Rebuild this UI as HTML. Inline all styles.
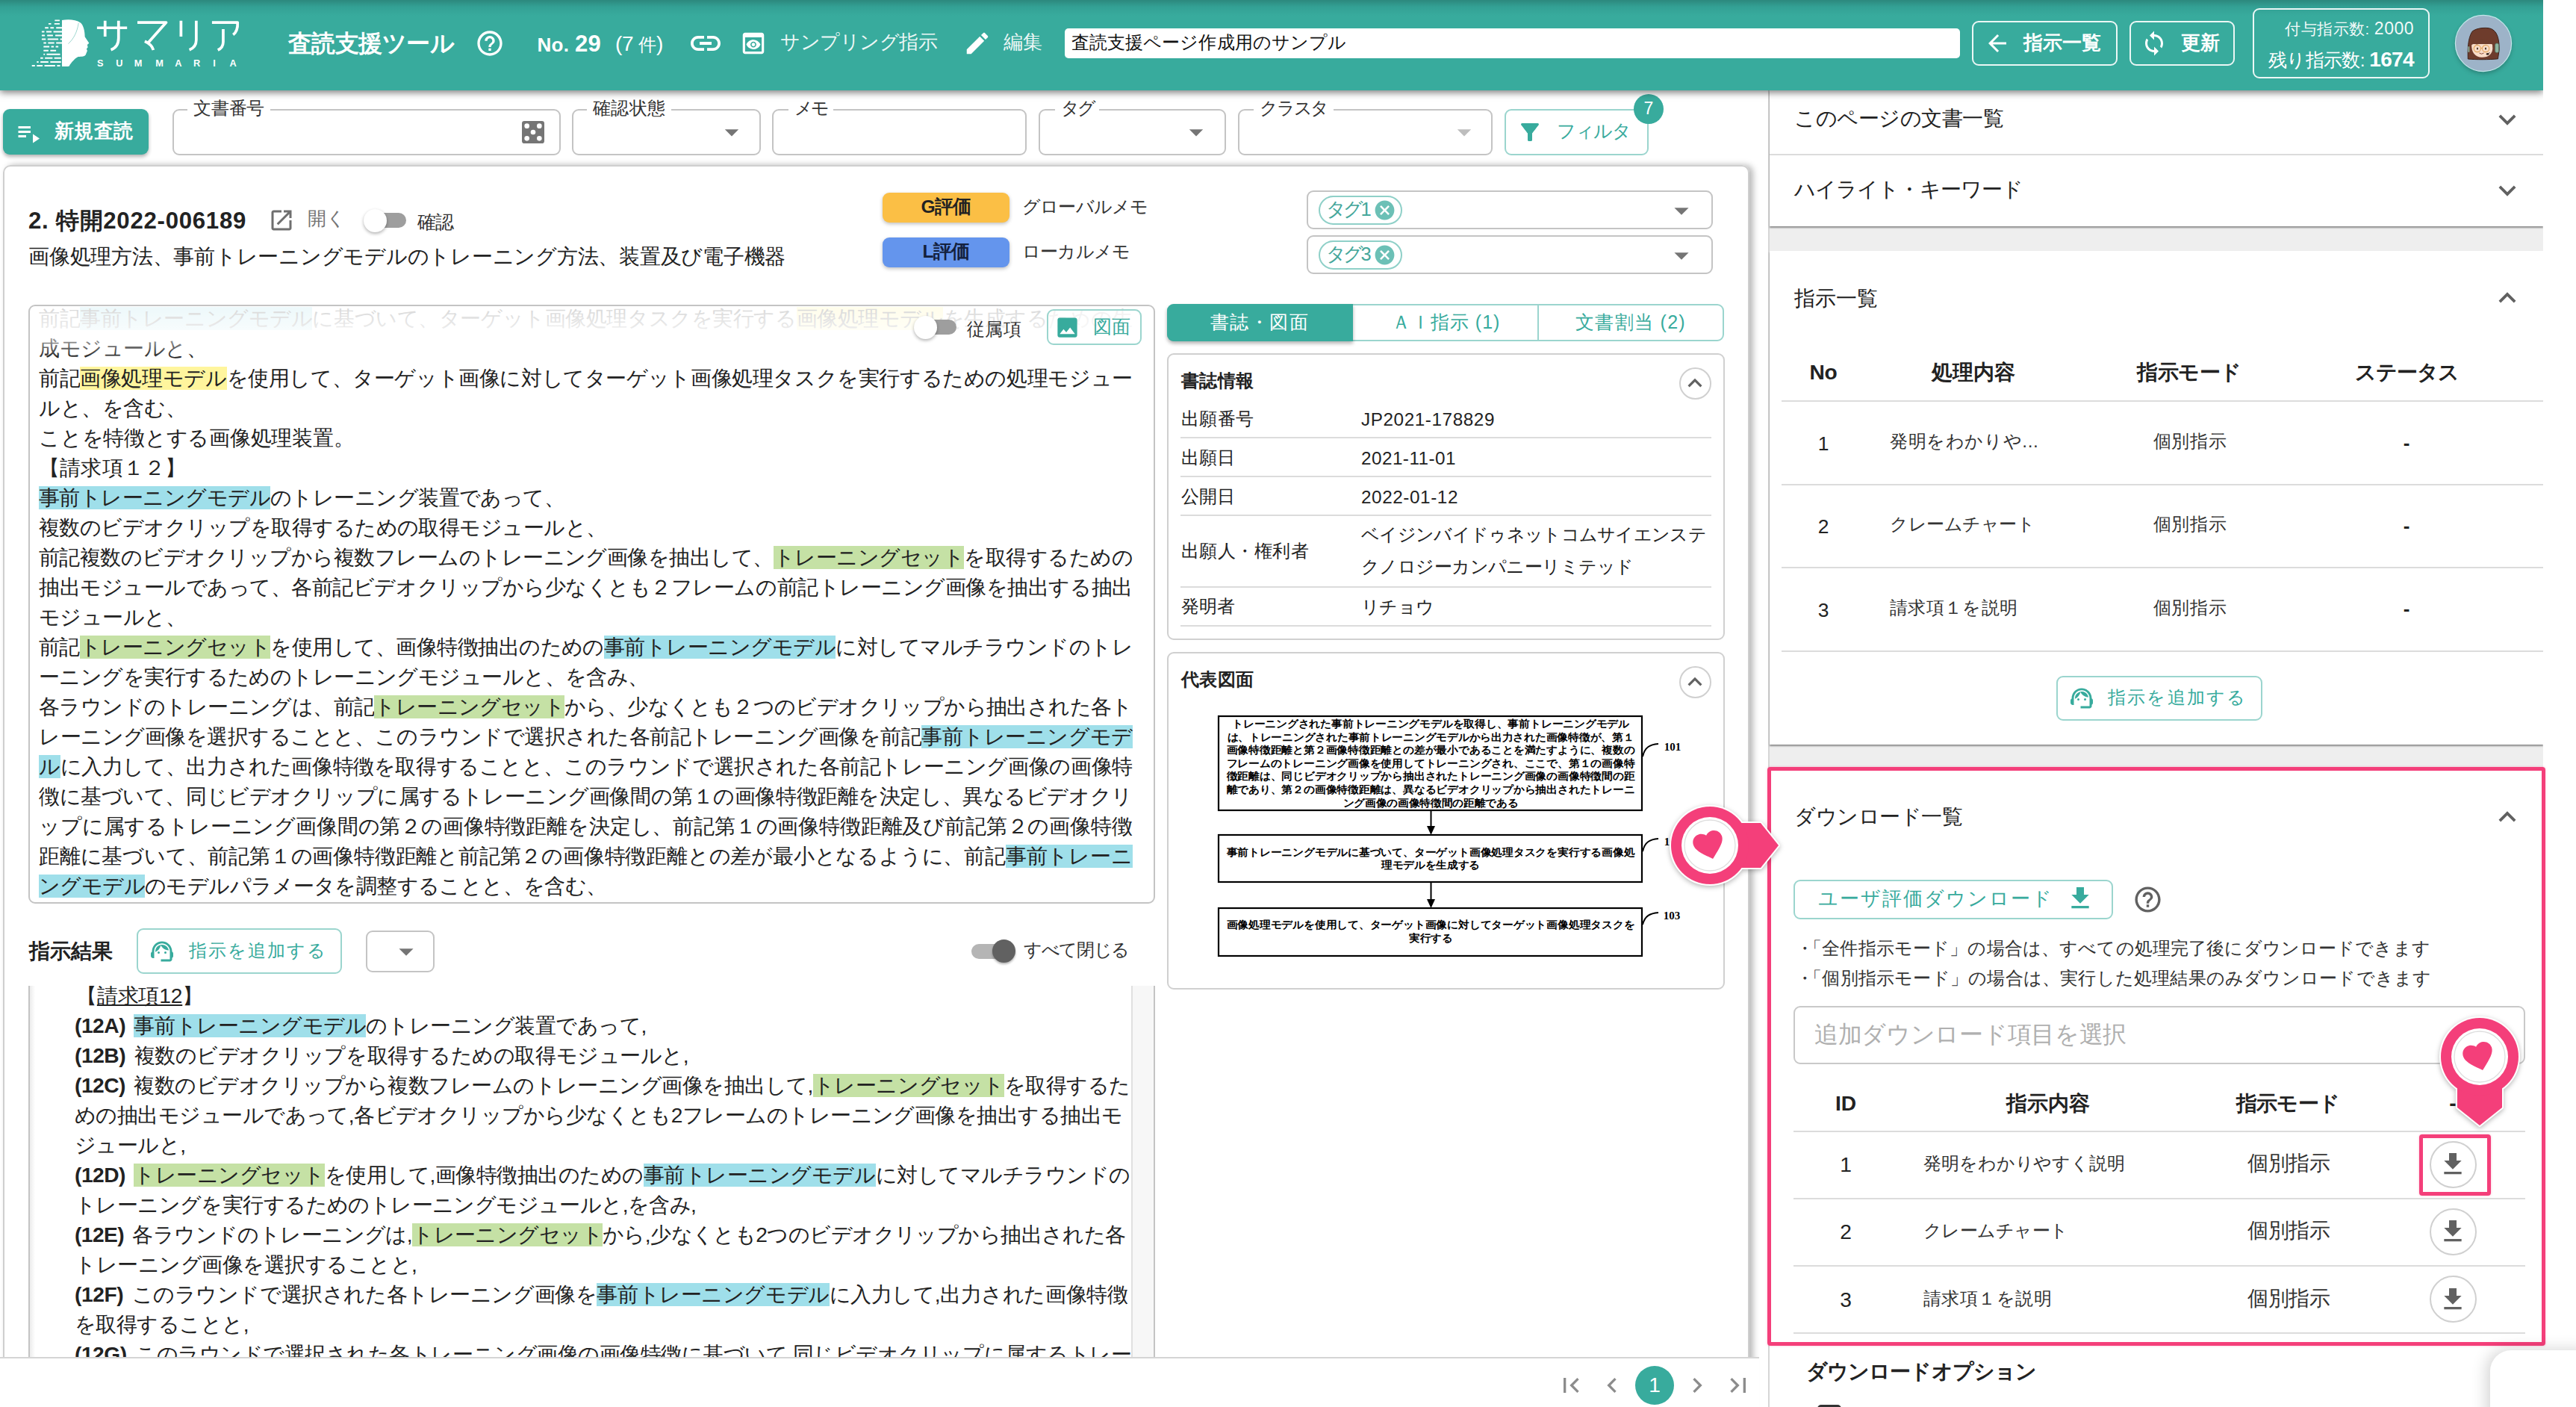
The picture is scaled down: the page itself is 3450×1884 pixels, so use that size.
<!DOCTYPE html>
<html><head><meta charset="utf-8"><title>査読支援ツール</title><style>html,body{margin:0;padding:0}body{width:3450px;height:1884px;position:relative;overflow:hidden;background:#fff;font-family:"Liberation Sans",sans-serif;}svg{display:block}b{font-weight:700;margin-right:4px}</style></head><body>
<div style="position:absolute;left:4px;top:221px;width:2339px;height:1679px;box-sizing:border-box;border:2px solid #cfcfcf;border-radius:10px;box-shadow:5px 0 9px rgba(0,0,0,.28)"></div>
<div style="position: absolute; left: 38px; top: 271.5px; height: 47px; line-height: 47px; font-size: 31.2px; color: rgb(34, 34, 34); font-weight: 700; white-space: nowrap; letter-spacing: 0.72px;">2. 特開2022-006189</div>
<svg style="position:absolute;left:358.8px;top:277.0px;" width="36" height="36" viewBox="0 0 24 24"><path fill="#6f6f6f" d="M19 19H5V5h7V3H5c-1.11 0-2 .9-2 2v14c0 1.1.89 2 2 2h14c1.1 0 2-.9 2-2v-7h-2v7zM14 3v2h3.59l-9.83 9.83 1.41 1.41L19 6.41V10h2V3h-7z"></path></svg>
<div style="position: absolute; left: 412px; top: 273.5px; height: 37px; line-height: 37px; font-size: 24.6px; color: rgb(117, 117, 117); font-weight: 400; white-space: nowrap; letter-spacing: 0.25px;">開く</div>
<div style="position:absolute;left:502px;top:285px;width:42px;height:20px;box-sizing:border-box;background:#9e9e9e;border-radius:10px"></div><div style="position:absolute;left:486.5px;top:279.5px;width:31.0px;height:31.0px;box-sizing:border-box;background:#fff;border-radius:50%;box-shadow:0 2px 4px rgba(0,0,0,.3)"></div>
<div style="position: absolute; left: 559px; top: 278.5px; height: 37px; line-height: 37px; font-size: 24.6px; color: rgb(51, 51, 51); font-weight: 400; white-space: nowrap; letter-spacing: -1px;">確認</div>
<div style="position: absolute; left: 38px; top: 323px; height: 42px; line-height: 42px; font-size: 28.16px; color: rgb(34, 34, 34); font-weight: 400; white-space: nowrap; letter-spacing: -0.25px;">画像処理方法、事前トレーニングモデルのトレーニング方法、装置及び電子機器</div>
<div style="position:absolute;left:1182px;top:258px;width:170px;height:40px;box-sizing:border-box;background:#fbbf45;border-radius:9px;box-shadow:0 2px 5px rgba(0,0,0,.25);text-align:center;font-weight:700;font-size:24.6px;line-height:38px;color:#222"><span style="letter-spacing: -0.71px;">G評価</span></div>
<div style="position:absolute;left:1182px;top:318px;width:170px;height:40px;box-sizing:border-box;background:#6495ed;border-radius:9px;box-shadow:0 2px 5px rgba(0,0,0,.25);text-align:center;font-weight:700;font-size:24.6px;line-height:38px;color:#14213d"><span style="letter-spacing: -0.68px;">L評価</span></div>
<div style="position: absolute; left: 1369px; top: 259px; height: 36px; line-height: 36px; font-size: 24.3px; color: rgb(51, 51, 51); font-weight: 400; white-space: nowrap; letter-spacing: -0.79px;">グローバルメモ</div>
<div style="position: absolute; left: 1369px; top: 319px; height: 36px; line-height: 36px; font-size: 24.3px; color: rgb(51, 51, 51); font-weight: 400; white-space: nowrap; letter-spacing: -0.83px;">ローカルメモ</div>
<div style="position:absolute;left:1750px;top:255px;width:544px;height:52px;box-sizing:border-box;border:2px solid #c4c4c4;border-radius:9px"></div>
<div style="position:absolute;left:1766px;top:261.5px;width:112px;height:39.0px;box-sizing:border-box;border:2px solid #8fd0c8;border-radius:20px"></div>
<div style="position: absolute; left: 1776px; top: 261px; height: 38px; line-height: 38px; font-size: 25.5px; color: rgb(69, 167, 155); font-weight: 400; white-space: nowrap; letter-spacing: -3.73px;">タグ1</div>
<svg style="position:absolute;left:1838.5px;top:265.5px;" width="31" height="31" viewBox="0 0 24 24"><path fill="#6cc0b6" d="M12,2C17.53,2 22,6.47 22,12C22,17.53 17.53,22 12,22C6.47,22 2,17.53 2,12C2,6.47 6.47,2 12,2M15.59,7L12,10.59L8.41,7L7,8.41L10.59,12L7,15.59L8.41,17L12,13.41L15.59,17L17,15.59L13.41,12L17,8.41L15.59,7Z"></path></svg>
<svg style="position:absolute;left:2228.5px;top:259.0px;" width="46" height="46" viewBox="0 0 24 24"><path fill="#757575" d="M7,10L12,15L17,10H7Z"></path></svg>
<div style="position:absolute;left:1750px;top:315px;width:544px;height:52px;box-sizing:border-box;border:2px solid #c4c4c4;border-radius:9px"></div>
<div style="position:absolute;left:1766px;top:321.5px;width:112px;height:39.0px;box-sizing:border-box;border:2px solid #8fd0c8;border-radius:20px"></div>
<div style="position: absolute; left: 1776px; top: 321px; height: 38px; line-height: 38px; font-size: 25.5px; color: rgb(69, 167, 155); font-weight: 400; white-space: nowrap; letter-spacing: -3.73px;">タグ3</div>
<svg style="position:absolute;left:1838.5px;top:325.5px;" width="31" height="31" viewBox="0 0 24 24"><path fill="#6cc0b6" d="M12,2C17.53,2 22,6.47 22,12C22,17.53 17.53,22 12,22C6.47,22 2,17.53 2,12C2,6.47 6.47,2 12,2M15.59,7L12,10.59L8.41,7L7,8.41L10.59,12L7,15.59L8.41,17L12,13.41L15.59,17L17,15.59L13.41,12L17,8.41L15.59,7Z"></path></svg>
<svg style="position:absolute;left:2228.5px;top:319.0px;" width="46" height="46" viewBox="0 0 24 24"><path fill="#757575" d="M7,10L12,15L17,10H7Z"></path></svg>
<div style="position:absolute;left:38px;top:408px;width:1509px;height:802px;box-sizing:border-box;border:2px solid #c4c4c4;border-radius:9px;overflow:hidden;font-size:28.16px;color:#222;"><div style="position:absolute;left:12px;top:-3px"><div style="height: 40px; line-height: 40px; white-space: nowrap; color: rgb(194, 194, 194); letter-spacing: -0.43px;">前記<span style="background:#e3f5f8">事前トレーニングモデル</span>に基づいて、ターゲット画像処理タスクを実行する<span style="background:#fffce0">画像処理モデル</span>を生成するための生</div><div style="height: 40px; line-height: 40px; white-space: nowrap; letter-spacing: -0.45px;">成モジュールと、</div><div style="height: 40px; line-height: 40px; white-space: nowrap; letter-spacing: -0.39px;">前記<span style="background:#fff59d">画像処理モデル</span>を使用して、ターゲット画像に対してターゲット画像処理タスクを実行するための処理モジュー</div><div style="height: 40px; line-height: 40px; white-space: nowrap; letter-spacing: -0.4px;">ルと、を含む、</div><div style="height: 40px; line-height: 40px; white-space: nowrap; letter-spacing: -0.23px;">ことを特徴とする画像処理装置。</div><div style="height: 40px; line-height: 40px; white-space: nowrap; letter-spacing: 0.17px;">【請求項１２】</div><div style="height: 40px; line-height: 40px; white-space: nowrap; letter-spacing: -0.55px;"><span style="background:#9fdfea">事前トレーニングモデル</span>のトレーニング装置であって、</div><div style="height: 40px; line-height: 40px; white-space: nowrap; letter-spacing: -0.53px;">複数のビデオクリップを取得するための取得モジュールと、</div><div style="height: 40px; line-height: 40px; white-space: nowrap; letter-spacing: -0.52px;">前記複数のビデオクリップから複数フレームのトレーニング画像を抽出して、<span style="background:#c5e1a5">トレーニングセット</span>を取得するための</div><div style="height: 40px; line-height: 40px; white-space: nowrap; letter-spacing: -0.47px;">抽出モジュールであって、各前記ビデオクリップから少なくとも２フレームの前記トレーニング画像を抽出する抽出</div><div style="height: 40px; line-height: 40px; white-space: nowrap; letter-spacing: -0.54px;">モジュールと、</div><div style="height: 40px; line-height: 40px; white-space: nowrap; letter-spacing: -0.52px;">前記<span style="background:#c5e1a5">トレーニングセット</span>を使用して、画像特徴抽出のための<span style="background:#9fdfea">事前トレーニングモデル</span>に対してマルチラウンドのトレ</div><div style="height: 40px; line-height: 40px; white-space: nowrap; letter-spacing: -0.56px;">ーニングを実行するためのトレーニングモジュールと、を含み、</div><div style="height: 40px; line-height: 40px; white-space: nowrap; letter-spacing: -0.6px;">各ラウンドのトレーニングは、前記<span style="background:#c5e1a5">トレーニングセット</span>から、少なくとも２つのビデオクリップから抽出された各ト</div><div style="height: 40px; line-height: 40px; white-space: nowrap; letter-spacing: -0.47px;">レーニング画像を選択することと、このラウンドで選択された各前記トレーニング画像を前記<span style="background:#9fdfea">事前トレーニングモデ</span></div><div style="height: 40px; line-height: 40px; white-space: nowrap; letter-spacing: -0.39px;"><span style="background:#9fdfea">ル</span>に入力して、出力された画像特徴を取得することと、このラウンドで選択された各前記トレーニング画像の画像特</div><div style="height: 40px; line-height: 40px; white-space: nowrap; letter-spacing: -0.43px;">徴に基づいて、同じビデオクリップに属するトレーニング画像間の第１の画像特徴距離を決定し、異なるビデオクリ</div><div style="height: 40px; line-height: 40px; white-space: nowrap; letter-spacing: -0.16px;">ップに属するトレーニング画像間の第２の画像特徴距離を決定し、前記第１の画像特徴距離及び前記第２の画像特徴</div><div style="height: 40px; line-height: 40px; white-space: nowrap; letter-spacing: -0.2px;">距離に基づいて、前記第１の画像特徴距離と前記第２の画像特徴距離との差が最小となるように、前記<span style="background:#9fdfea">事前トレーニ</span></div><div style="height: 40px; line-height: 40px; white-space: nowrap; letter-spacing: -0.61px;"><span style="background:#9fdfea">ングモデル</span>のモデルパラメータを調整することと、を含む、</div></div><div style="position:absolute;left:0;top:0;width:100%;height:70px;background:linear-gradient(rgba(255,255,255,.35),rgba(255,255,255,.75) 50%,rgba(255,255,255,0))"></div></div>
<div style="position:absolute;left:1239px;top:428px;width:42px;height:20px;box-sizing:border-box;background:#9e9e9e;border-radius:10px"></div><div style="position:absolute;left:1223.5px;top:422.5px;width:31.0px;height:31.0px;box-sizing:border-box;background:#fff;border-radius:50%;box-shadow:0 2px 4px rgba(0,0,0,.3)"></div>
<div style="position: absolute; left: 1295px; top: 421.5px; height: 37px; line-height: 37px; font-size: 24.4px; color: rgb(51, 51, 51); font-weight: 400; white-space: nowrap; letter-spacing: 0.33px;">従属項</div>
<div style="position:absolute;left:1402px;top:414px;width:127px;height:48px;box-sizing:border-box;border:2px solid #9bd5ce;border-radius:9px;background:rgba(255,255,255,.62)"></div>
<svg style="position:absolute;left:1412.0px;top:420.5px;" width="35" height="35" viewBox="0 0 24 24"><path fill="#38ab9d" d="M8.5,13.5L11,16.5L14.5,12L19,18H5M21,19V5C21,3.89 20.1,3 19,3H5A2,2 0 0,0 3,5V19A2,2 0 0,0 5,21H19A2,2 0 0,0 21,19Z"></path></svg>
<div style="position: absolute; left: 1464px; top: 418px; height: 38px; line-height: 38px; font-size: 25px; color: rgb(56, 171, 157); font-weight: 400; white-space: nowrap; letter-spacing: 0px;">図面</div>
<div style="position:absolute;left:1563px;top:407px;width:746px;height:50px;box-sizing:border-box;border:2px solid #9bd5ce;border-radius:9px"></div>
<div style="position:absolute;left:1563px;top:407px;width:249px;height:50px;box-sizing:border-box;background:#38ab9d;border-radius:9px 0 0 9px;box-shadow:0 3px 5px rgba(0,0,0,.3)"></div>
<div style="position:absolute;left:2059px;top:407px;width:2px;height:50px;box-sizing:border-box;background:#9bd5ce"></div>
<div style="position: absolute; left: 1687px; top: 412px; height: 38px; line-height: 38px; font-size: 25px; color: rgb(255, 255, 255); font-weight: 400; white-space: nowrap; transform: translateX(-50%); letter-spacing: 1.6px;">書誌・図面</div>
<div style="position: absolute; left: 1936.5px; top: 412px; height: 38px; line-height: 38px; font-size: 25px; color: rgb(56, 171, 157); font-weight: 400; white-space: nowrap; transform: translateX(-50%); letter-spacing: 1.06px;">ＡＩ指示 (1)</div>
<div style="position: absolute; left: 2184px; top: 412px; height: 38px; line-height: 38px; font-size: 25px; color: rgb(56, 171, 157); font-weight: 400; white-space: nowrap; transform: translateX(-50%); letter-spacing: 1.31px;">文書割当 (2)</div>
<div style="position:absolute;left:1563px;top:473px;width:747px;height:384px;box-sizing:border-box;border:2px solid #d0d0d0;border-radius:9px"></div>
<div style="position: absolute; left: 1582px; top: 490.5px; height: 37px; line-height: 37px; font-size: 24.4px; color: rgb(34, 34, 34); font-weight: 700; white-space: nowrap; letter-spacing: 0.25px;">書誌情報</div>
<div style="position:absolute;left:2248.5px;top:491.5px;width:43.0px;height:43.0px;box-sizing:border-box;border:2px solid #d0d0d0;border-radius:50%"></div><svg style="position:absolute;left:2251.0px;top:494.0px;" width="38" height="38" viewBox="0 0 24 24"><path fill="#616161" d="M12 8l-6 6 1.41 1.41L12 10.83l4.59 4.59L18 14z"></path></svg>
<div style="position: absolute; left: 1582px; top: 543px; height: 36px; line-height: 36px; font-size: 24.3px; color: rgb(34, 34, 34); font-weight: 400; white-space: nowrap; letter-spacing: 0.25px;">出願番号</div>
<div style="position: absolute; left: 1823px; top: 544px; height: 36px; line-height: 36px; font-size: 24.3px; color: rgb(34, 34, 34); font-weight: 400; white-space: nowrap; letter-spacing: 0.57px;">JP2021-178829</div>
<div style="position:absolute;left:1581px;top:585.0px;width:711px;height:2px;background:#dcdcdc"></div>
<div style="position: absolute; left: 1582px; top: 595px; height: 36px; line-height: 36px; font-size: 24.3px; color: rgb(34, 34, 34); font-weight: 400; white-space: nowrap; letter-spacing: 0px;">出願日</div>
<div style="position: absolute; left: 1823px; top: 596px; height: 36px; line-height: 36px; font-size: 24.3px; color: rgb(34, 34, 34); font-weight: 400; white-space: nowrap; letter-spacing: 0.45px;">2021-11-01</div>
<div style="position:absolute;left:1581px;top:637.0px;width:711px;height:2px;background:#dcdcdc"></div>
<div style="position: absolute; left: 1582px; top: 646.5px; height: 36px; line-height: 36px; font-size: 24.3px; color: rgb(34, 34, 34); font-weight: 400; white-space: nowrap; letter-spacing: 0px;">公開日</div>
<div style="position: absolute; left: 1823px; top: 647.5px; height: 36px; line-height: 36px; font-size: 24.3px; color: rgb(34, 34, 34); font-weight: 400; white-space: nowrap; letter-spacing: 0.57px;">2022-01-12</div>
<div style="position:absolute;left:1581px;top:689.0px;width:711px;height:2px;background:#dcdcdc"></div>
<div style="position: absolute; left: 1582px; top: 720px; height: 36px; line-height: 36px; font-size: 24.3px; color: rgb(34, 34, 34); font-weight: 400; white-space: nowrap; letter-spacing: 0.43px;">出願人・権利者</div>
<div style="position:absolute;left:1581px;top:785.0px;width:711px;height:2px;background:#dcdcdc"></div>
<div style="position: absolute; left: 1582px; top: 793.5px; height: 36px; line-height: 36px; font-size: 24.3px; color: rgb(34, 34, 34); font-weight: 400; white-space: nowrap; letter-spacing: 0px;">発明者</div>
<div style="position: absolute; left: 1823px; top: 794.5px; height: 36px; line-height: 36px; font-size: 24.3px; color: rgb(34, 34, 34); font-weight: 400; white-space: nowrap; letter-spacing: -0.75px;">リチョウ</div>
<div style="position:absolute;left:1581px;top:837.0px;width:711px;height:2px;background:#dcdcdc"></div>
<div style="position: absolute; left: 1823px; top: 697.5px; height: 36px; line-height: 36px; font-size: 24.3px; color: rgb(34, 34, 34); font-weight: 400; white-space: nowrap; letter-spacing: -0.68px;">ベイジンバイドゥネットコムサイエンステ</div>
<div style="position: absolute; left: 1823px; top: 741px; height: 36px; line-height: 36px; font-size: 24.3px; color: rgb(34, 34, 34); font-weight: 400; white-space: nowrap; letter-spacing: -0.57px;">クノロジーカンパニーリミテッド</div>
<div style="position:absolute;left:1563px;top:873px;width:747px;height:452px;box-sizing:border-box;border:2px solid #d0d0d0;border-radius:9px"></div>
<div style="position: absolute; left: 1582px; top: 890.5px; height: 37px; line-height: 37px; font-size: 24.4px; color: rgb(34, 34, 34); font-weight: 700; white-space: nowrap; letter-spacing: 0.25px;">代表図面</div>
<div style="position:absolute;left:2248.5px;top:891.5px;width:43.0px;height:43.0px;box-sizing:border-box;border:2px solid #d0d0d0;border-radius:50%"></div><svg style="position:absolute;left:2251.0px;top:894.0px;" width="38" height="38" viewBox="0 0 24 24"><path fill="#616161" d="M12 8l-6 6 1.41 1.41L12 10.83l4.59 4.59L18 14z"></path></svg>
<svg style="position:absolute;left:1620px;top:950px" width="660" height="345" viewBox="1620 950 660 345"><g fill="#fff" stroke="#000" stroke-width="2.2"><rect x="1632" y="959" width="567" height="126"></rect><rect x="1632" y="1118" width="567" height="63"></rect><rect x="1632" y="1216" width="567" height="64"></rect></g><g stroke="#000" stroke-width="2" fill="none"><path d="M1916.5 1085V1112"></path><path d="M1916.5 1181V1210"></path><path d="M2200 1013 C2203 1000 2210 997 2221 996"></path><path d="M2200 1140 C2203 1127 2210 1124 2221 1123"></path><path d="M2200 1238 C2203 1226 2210 1223 2221 1222"></path></g><path d="M1911 1106 L1922 1106 L1916.5 1118Z M1911 1204 L1922 1204 L1916.5 1216Z" fill="#000"></path><g font-family="Liberation Serif, serif" font-weight="700" font-size="13.6" fill="#000" text-anchor="middle"><text x="1916" y="974.0" textLength="532" lengthAdjust="spacingAndGlyphs">トレーニングされた事前トレーニングモデルを取得し、事前トレーニングモデル</text><text x="1916" y="991.6" textLength="545" lengthAdjust="spacingAndGlyphs">は、トレーニングされた事前トレーニングモデルから出力された画像特徴が、第１</text><text x="1916" y="1009.2" textLength="547" lengthAdjust="spacingAndGlyphs">画像特徴距離と第２画像特徴距離との差が最小であることを満たすように、複数の</text><text x="1916" y="1026.8" textLength="547" lengthAdjust="spacingAndGlyphs">フレームのトレーニング画像を使用してトレーニングされ、ここで、第１の画像特</text><text x="1916" y="1044.4" textLength="547" lengthAdjust="spacingAndGlyphs">徴距離は、同じビデオクリップから抽出されたトレーニング画像の画像特徴間の距</text><text x="1916" y="1062.0" textLength="547" lengthAdjust="spacingAndGlyphs">離であり、第２の画像特徴距離は、異なるビデオクリップから抽出されたトレーニ</text><text x="1916" y="1079.6" textLength="235" lengthAdjust="spacingAndGlyphs">ング画像の画像特徴間の距離である</text><text x="1916" y="1146" textLength="547" lengthAdjust="spacingAndGlyphs">事前トレーニングモデルに基づいて、ターゲット画像処理タスクを実行する画像処</text><text x="1916" y="1163" textLength="132" lengthAdjust="spacingAndGlyphs">理モデルを生成する</text><text x="1916" y="1243" textLength="547" lengthAdjust="spacingAndGlyphs">画像処理モデルを使用して、ターゲット画像に対してターゲット画像処理タスクを</text><text x="1916" y="1261" textLength="58" lengthAdjust="spacingAndGlyphs">実行する</text><text x="2240" y="1005" font-size="15">101</text><text x="2240" y="1132" font-size="15">102</text><text x="2239" y="1231" font-size="15">103</text></g></svg>
<div style="position: absolute; left: 39px; top: 1252.5px; height: 42px; line-height: 42px; font-size: 28.16px; color: rgb(34, 34, 34); font-weight: 700; white-space: nowrap; letter-spacing: 0px;">指示結果</div>
<div style="position:absolute;left:183px;top:1243px;width:275px;height:61px;box-sizing:border-box;border:2px solid #9bd5ce;border-radius:9px"></div>
<svg style="position:absolute;left:199.0px;top:1256.0px;" width="36" height="36" viewBox="0 0 24 24"><path fill="#38ab9d" d="M21,12.22C21,6.73,16.74,3,12,3c-4.69,0-9,3.65-9,9.28C2.4,12.62,2,13.26,2,14v2c0,1.1,0.9,2,2,2h1v-6.1c0-3.87,3.13-7,7-7s7,3.13,7,7V19h-8v2h8c1.1,0,2-0.9,2-2v-1.22c0.59-0.31,1-0.92,1-1.64v-2.3C22,13.14,21.59,12.53,21,12.22z M8 13a1 1 0 1 0 2 0a1 1 0 1 0 -2 0z M14 13a1 1 0 1 0 2 0a1 1 0 1 0 -2 0z M18,11.03C17.52,8.18,15.04,6,12.05,6c-3.03,0-6.29,2.51-6.03,6.45c2.47-1.01,4.33-3.21,4.86-5.89C12.19,9.19,14.88,11,18,11.03z"></path></svg>
<div style="position: absolute; left: 252.5px; top: 1253.5px; height: 37px; line-height: 37px; font-size: 24.4px; color: rgb(56, 171, 157); font-weight: 400; white-space: nowrap; letter-spacing: 2.14px;">指示を追加する</div>
<div style="position:absolute;left:490px;top:1246px;width:92px;height:56px;box-sizing:border-box;border:2px solid #c4c4c4;border-radius:9px"></div>
<svg style="position:absolute;left:521.0px;top:1251.0px;" width="46" height="46" viewBox="0 0 24 24"><path fill="#757575" d="M7,10L12,15L17,10H7Z"></path></svg>
<div style="position:absolute;left:1301px;top:1263.5px;width:43px;height:20.0px;box-sizing:border-box;background:#b5b5b5;border-radius:10px"></div><div style="position:absolute;left:1328.5px;top:1258.0px;width:31.0px;height:31.0px;box-sizing:border-box;background:#616161;border-radius:50%;box-shadow:0 2px 3px rgba(0,0,0,.3)"></div>
<div style="position: absolute; left: 1371px; top: 1254px; height: 36px; line-height: 36px; font-size: 23.8px; color: rgb(51, 51, 51); font-weight: 400; white-space: nowrap; letter-spacing: -1.33px;">すべて閉じる</div>
<div style="position:absolute;left:38px;top:1320px;width:1509px;height:498px;box-sizing:border-box;border-left:2px solid #c4c4c4;border-right:2px solid #c4c4c4;background:#f7f7f7;overflow:hidden"><div style="position:absolute;left:0;top:0;width:1475px;height:520px;background:linear-gradient(90deg,#ececec 0,#fff 7px);border-right:2px solid #e0e0e0"></div><div style="position:absolute;left:60px;top:-6px;font-size:28.16px;color:#222"><div style="height: 40px; line-height: 40px; white-space: nowrap; letter-spacing: -0.18px;"><span style="padding-left:2px">【<u>請求項12</u>】</span></div><div style="height: 40px; line-height: 40px; white-space: nowrap; letter-spacing: -0.46px;"><b>(12A)</b> <span style="background:#9fdfea">事前トレーニングモデル</span>のトレーニング装置であって,</div><div style="height: 40px; line-height: 40px; white-space: nowrap; letter-spacing: -0.45px;"><b>(12B)</b> 複数のビデオクリップを取得するための取得モジュールと,</div><div style="height: 40px; line-height: 40px; white-space: nowrap; letter-spacing: -0.49px;"><b>(12C)</b> 複数のビデオクリップから複数フレームのトレーニング画像を抽出して,<span style="background:#c5e1a5">トレーニングセット</span>を取得するた</div><div style="height: 40px; line-height: 40px; white-space: nowrap; letter-spacing: -0.55px;">めの抽出モジュールであって,各ビデオクリップから少なくとも2フレームのトレーニング画像を抽出する抽出モ</div><div style="height: 40px; line-height: 40px; white-space: nowrap; letter-spacing: -0.54px;">ジュールと,</div><div style="height: 40px; line-height: 40px; white-space: nowrap; letter-spacing: -0.49px;"><b>(12D)</b> <span style="background:#c5e1a5">トレーニングセット</span>を使用して,画像特徴抽出のための<span style="background:#9fdfea">事前トレーニングモデル</span>に対してマルチラウンドの</div><div style="height: 40px; line-height: 40px; white-space: nowrap; letter-spacing: -0.59px;">トレーニングを実行するためのトレーニングモジュールと,を含み,</div><div style="height: 40px; line-height: 40px; white-space: nowrap; letter-spacing: -0.57px;"><b>(12E)</b> 各ラウンドのトレーニングは,<span style="background:#c5e1a5">トレーニングセット</span>から,少なくとも2つのビデオクリップから抽出された各</div><div style="height: 40px; line-height: 40px; white-space: nowrap; letter-spacing: -0.5px;">トレーニング画像を選択することと,</div><div style="height: 40px; line-height: 40px; white-space: nowrap; letter-spacing: -0.42px;"><b>(12F)</b> このラウンドで選択された各トレーニング画像を<span style="background:#9fdfea">事前トレーニングモデル</span>に入力して,出力された画像特徴</div><div style="height: 40px; line-height: 40px; white-space: nowrap; letter-spacing: -0.53px;">を取得することと,</div><div style="height: 40px; line-height: 40px; white-space: nowrap; letter-spacing: -0.47px;"><b>(12G)</b> このラウンドで選択された各トレーニング画像の画像特徴に基づいて,同じビデオクリップに属するトレー</div><div style="height: 40px; line-height: 40px; white-space: nowrap; letter-spacing: -0.19px;">ニング画像間の第1の画像特徴距離を決定し,</div></div></div>
<div style="position:absolute;left:0px;top:1817px;width:2356px;height:67px;box-sizing:border-box;background:#fff;border-top:2px solid #d5d5d5"></div>
<svg style="position:absolute;left:2084.0px;top:1834.5px;" width="40" height="40" viewBox="0 0 24 24"><path fill="#8c8c8c" d="M18.41,16.59L13.82,12L18.41,7.41L17,6L11,12L17,18L18.41,16.59M6,6H8V18H6V6Z"></path></svg>
<svg style="position:absolute;left:2139.0px;top:1834.5px;" width="40" height="40" viewBox="0 0 24 24"><path fill="#8c8c8c" d="M15.41,16.58L10.83,12L15.41,7.41L14,6L8,12L14,18L15.41,16.58Z"></path></svg>
<div style="position:absolute;left:2190px;top:1828.5px;width:52px;height:52.0px;box-sizing:border-box;background:#38ab9d;border-radius:50%;color:#fff;font-size:28px;text-align:center;line-height:52px">1</div>
<svg style="position:absolute;left:2253.0px;top:1834.5px;" width="40" height="40" viewBox="0 0 24 24"><path fill="#8c8c8c" d="M8.59,16.58L13.17,12L8.59,7.41L10,6L16,12L10,18L8.59,16.58Z"></path></svg>
<svg style="position:absolute;left:2308.0px;top:1834.5px;" width="40" height="40" viewBox="0 0 24 24"><path fill="#8c8c8c" d="M5.59,7.41L10.18,12L5.59,16.59L7,18L13,12L7,6L5.59,7.41M16,6H18V18H16V6Z"></path></svg>
<svg style="position:absolute;left:2219.5px;top:1062px;filter:drop-shadow(0 2px 3px rgba(0,0,0,.28));z-index:9" width="190" height="190" viewBox="-70 -70 190 190"><g stroke="#fff" stroke-width="4" stroke-linejoin="round" fill="#fff"><path d="M0 -30 L68 -30 L92 0 L68 30 L0 30Z"></path><circle r="52"></circle></g><path fill="#f43f7a" d="M0 -30 L68 -30 L92 0 L68 30 L0 30Z"></path><circle r="52" fill="#f43f7a"></circle><circle r="38" fill="#fff"></circle><circle r="34" fill="none" stroke="#dedede" stroke-width="1.3"></circle><g transform="translate(-1,0.5) rotate(-16) scale(2.0) translate(-12,-12.2)"><path fill="#f43f7a" d="M12,21.35L10.55,20.03C5.4,15.36 2,12.27 2,8.5C2,5.41 4.42,3 7.5,3C9.24,3 10.91,3.81 12,5.08C13.09,3.81 14.76,3 16.5,3C19.58,3 22,5.41 22,8.5C22,12.27 18.6,15.36 13.45,20.03L12,21.35Z"></path></g></svg>
<div style="position:absolute;left:0;top:0;width:3406px;height:1884px;overflow:hidden">
<div style="position:absolute;left:2368px;top:121px;width:1038px;height:1763px;box-sizing:border-box;background:#eeeeee;border-left:2px solid #d6d6d6"></div>
<div style="position:absolute;left:2370px;top:121px;width:1036px;height:182px;box-sizing:border-box;background:#fff;box-shadow:0 2px 2px rgba(0,0,0,.42)"></div>
<div style="position: absolute; left: 2403px; top: 138px; height: 42px; line-height: 42px; font-size: 28.16px; color: rgb(34, 34, 34); font-weight: 400; white-space: nowrap; letter-spacing: -0.5px;">このページの文書一覧</div>
<svg style="position:absolute;left:3335.0px;top:137.0px;" width="46" height="46" viewBox="0 0 24 24"><path fill="#616161" d="M16.59 8.59L12 13.17 7.41 8.59 6 10l6 6 6-6z"></path></svg>
<div style="position:absolute;left:2370px;top:206.0px;width:1036px;height:2px;background:#dcdcdc"></div>
<div style="position: absolute; left: 2403px; top: 233px; height: 42px; line-height: 42px; font-size: 28.16px; color: rgb(34, 34, 34); font-weight: 400; white-space: nowrap; letter-spacing: -0.91px;">ハイライト・キーワード</div>
<svg style="position:absolute;left:3335.0px;top:232.0px;" width="46" height="46" viewBox="0 0 24 24"><path fill="#616161" d="M16.59 8.59L12 13.17 7.41 8.59 6 10l6 6 6-6z"></path></svg>
<div style="position:absolute;left:2370px;top:336px;width:1036px;height:661px;box-sizing:border-box;background:#fff;box-shadow:0 2px 2px rgba(0,0,0,.42)"></div>
<div style="position: absolute; left: 2403px; top: 378.5px; height: 42px; line-height: 42px; font-size: 28.16px; color: rgb(34, 34, 34); font-weight: 400; white-space: nowrap; letter-spacing: 0px;">指示一覧</div>
<svg style="position:absolute;left:3335.0px;top:376.0px;" width="46" height="46" viewBox="0 0 24 24"><path fill="#616161" d="M12 8l-6 6 1.41 1.41L12 10.83l4.59 4.59L18 14z"></path></svg>
<div style="position: absolute; left: 2442px; top: 477.5px; height: 42px; line-height: 42px; font-size: 28.16px; color: rgb(34, 34, 34); font-weight: 700; white-space: nowrap; transform: translateX(-50%); letter-spacing: -0.27px;">No</div>
<div style="position: absolute; left: 2643px; top: 477.5px; height: 42px; line-height: 42px; font-size: 28.16px; color: rgb(34, 34, 34); font-weight: 700; white-space: nowrap; transform: translateX(-50%); letter-spacing: 0.13px;">処理内容</div>
<div style="position: absolute; left: 2932px; top: 477.5px; height: 42px; line-height: 42px; font-size: 28.16px; color: rgb(34, 34, 34); font-weight: 700; white-space: nowrap; transform: translateX(-50%); letter-spacing: -0.6px;">指示モード</div>
<div style="position: absolute; left: 3223px; top: 477.5px; height: 42px; line-height: 42px; font-size: 28.16px; color: rgb(34, 34, 34); font-weight: 700; white-space: nowrap; transform: translateX(-50%); letter-spacing: -1px;">ステータス</div>
<div style="position:absolute;left:2386px;top:536.0px;width:1020px;height:2px;background:#dcdcdc"></div>
<div style="position:absolute;left:2442px;top:574.0px;height:40px;line-height:40px;font-size:26.4px;color:#222;font-weight:400;white-space:nowrap;transform:translateX(-50%);">1</div>
<div style="position: absolute; left: 2531px; top: 573px; height: 36px; line-height: 36px; font-size: 24.3px; color: rgb(51, 51, 51); font-weight: 400; white-space: nowrap; letter-spacing: 0.62px;">発明をわかりや...</div>
<div style="position: absolute; left: 2933px; top: 573px; height: 36px; line-height: 36px; font-size: 24.3px; color: rgb(51, 51, 51); font-weight: 400; white-space: nowrap; transform: translateX(-50%); letter-spacing: 0.63px;">個別指示</div>
<div style="position:absolute;left:3223px;top:573.5px;height:39px;line-height:39px;font-size:26px;color:#222;font-weight:700;white-space:nowrap;transform:translateX(-50%);">-</div>
<div style="position:absolute;left:2386px;top:648.0px;width:1020px;height:2px;background:#dcdcdc"></div>
<div style="position:absolute;left:2442px;top:685.0px;height:40px;line-height:40px;font-size:26.4px;color:#222;font-weight:400;white-space:nowrap;transform:translateX(-50%);">2</div>
<div style="position: absolute; left: 2531px; top: 684px; height: 36px; line-height: 36px; font-size: 24.3px; color: rgb(51, 51, 51); font-weight: 400; white-space: nowrap; letter-spacing: -0.44px;">クレームチャート</div>
<div style="position: absolute; left: 2933px; top: 684px; height: 36px; line-height: 36px; font-size: 24.3px; color: rgb(51, 51, 51); font-weight: 400; white-space: nowrap; transform: translateX(-50%); letter-spacing: 0.63px;">個別指示</div>
<div style="position:absolute;left:3223px;top:684.5px;height:39px;line-height:39px;font-size:26px;color:#222;font-weight:700;white-space:nowrap;transform:translateX(-50%);">-</div>
<div style="position:absolute;left:2386px;top:759.0px;width:1020px;height:2px;background:#dcdcdc"></div>
<div style="position:absolute;left:2442px;top:796.5px;height:40px;line-height:40px;font-size:26.4px;color:#222;font-weight:400;white-space:nowrap;transform:translateX(-50%);">3</div>
<div style="position: absolute; left: 2531px; top: 795.5px; height: 36px; line-height: 36px; font-size: 24.3px; color: rgb(51, 51, 51); font-weight: 400; white-space: nowrap; letter-spacing: 0.36px;">請求項１を説明</div>
<div style="position: absolute; left: 2933px; top: 795.5px; height: 36px; line-height: 36px; font-size: 24.3px; color: rgb(51, 51, 51); font-weight: 400; white-space: nowrap; transform: translateX(-50%); letter-spacing: 0.63px;">個別指示</div>
<div style="position:absolute;left:3223px;top:796.0px;height:39px;line-height:39px;font-size:26px;color:#222;font-weight:700;white-space:nowrap;transform:translateX(-50%);">-</div>
<div style="position:absolute;left:2386px;top:870.5px;width:1020px;height:2px;background:#dcdcdc"></div>
<div style="position:absolute;left:2754px;top:905px;width:276px;height:60px;box-sizing:border-box;border:2px solid #9bd5ce;border-radius:9px"></div>
<svg style="position:absolute;left:2770.0px;top:917.0px;" width="36" height="36" viewBox="0 0 24 24"><path fill="#38ab9d" d="M21,12.22C21,6.73,16.74,3,12,3c-4.69,0-9,3.65-9,9.28C2.4,12.62,2,13.26,2,14v2c0,1.1,0.9,2,2,2h1v-6.1c0-3.87,3.13-7,7-7s7,3.13,7,7V19h-8v2h8c1.1,0,2-0.9,2-2v-1.22c0.59-0.31,1-0.92,1-1.64v-2.3C22,13.14,21.59,12.53,21,12.22z M8 13a1 1 0 1 0 2 0a1 1 0 1 0 -2 0z M14 13a1 1 0 1 0 2 0a1 1 0 1 0 -2 0z M18,11.03C17.52,8.18,15.04,6,12.05,6c-3.03,0-6.29,2.51-6.03,6.45c2.47-1.01,4.33-3.21,4.86-5.89C12.19,9.19,14.88,11,18,11.03z"></path></svg>
<div style="position: absolute; left: 2823px; top: 914.5px; height: 37px; line-height: 37px; font-size: 24.4px; color: rgb(56, 171, 157); font-weight: 400; white-space: nowrap; letter-spacing: 2.21px;">指示を追加する</div>
<div style="position:absolute;left:2370px;top:1030px;width:1036px;height:854px;box-sizing:border-box;background:#fff"></div>
<div style="position: absolute; left: 2403px; top: 1072.5px; height: 42px; line-height: 42px; font-size: 28.16px; color: rgb(34, 34, 34); font-weight: 400; white-space: nowrap; letter-spacing: -0.5px;">ダウンロード一覧</div>
<svg style="position:absolute;left:3335.0px;top:1071.0px;" width="46" height="46" viewBox="0 0 24 24"><path fill="#616161" d="M12 8l-6 6 1.41 1.41L12 10.83l4.59 4.59L18 14z"></path></svg>
<div style="position:absolute;left:2402px;top:1178px;width:428px;height:53px;box-sizing:border-box;border:2px solid #9bd5ce;border-radius:9px"></div>
<div style="position: absolute; left: 2435px; top: 1183px; height: 40px; line-height: 40px; font-size: 26.4px; color: rgb(56, 171, 157); font-weight: 400; white-space: nowrap; letter-spacing: 2px;">ユーザ評価ダウンロード</div>
<svg style="position:absolute;left:2765.5px;top:1183.0px;" width="40" height="40" viewBox="0 0 24 24"><path fill="#38ab9d" d="M5,20H19V18H5M19,9H15V3H9V9H5L12,16L19,9Z"></path></svg>
<svg style="position:absolute;left:2855.5px;top:1183.5px;" width="41" height="41" viewBox="0 0 24 24"><path fill="#616161" d="M11 18h2v-2h-2v2zm1-16C6.48 2 2 6.48 2 12s4.48 10 10 10 10-4.48 10-10S17.52 2 12 2zm0 18c-4.41 0-8-3.59-8-8s3.59-8 8-8 8 3.59 8 8-3.59 8-8 8zm0-14c-2.21 0-4 1.79-4 4h2c0-1.1.9-2 2-2s2 .9 2 2c0 2-3 1.75-3 5h2c0-2.25 3-2.5 3-5 0-2.21-1.79-4-4-4z"></path></svg>
<div style="position: absolute; left: 2405px; top: 1251.5px; height: 36px; line-height: 36px; font-size: 24.3px; color: rgb(51, 51, 51); font-weight: 400; white-space: nowrap; letter-spacing: 0.14px;"><span style="margin-right:-13px">・</span>「全件指示モード」の場合は、すべての処理完了後にダウンロードできます</div>
<div style="position: absolute; left: 2405px; top: 1291.5px; height: 36px; line-height: 36px; font-size: 24.3px; color: rgb(51, 51, 51); font-weight: 400; white-space: nowrap; letter-spacing: 0.21px;"><span style="margin-right:-13px">・</span>「個別指示モード」の場合は、実行した処理結果のみダウンロードできます</div>
<div style="position:absolute;left:2402px;top:1347px;width:980px;height:78px;box-sizing:border-box;border:2px solid #c9c9c9;border-radius:9px"></div>
<div style="position: absolute; left: 2430px; top: 1361px; height: 48px; line-height: 48px; font-size: 32px; color: rgb(176, 176, 176); font-weight: 400; white-space: nowrap; letter-spacing: -0.31px;">追加ダウンロード項目を選択</div>
<div style="position: absolute; left: 2472px; top: 1457px; height: 42px; line-height: 42px; font-size: 28.16px; color: rgb(34, 34, 34); font-weight: 700; white-space: nowrap; transform: translateX(-50%); letter-spacing: -0.08px;">ID</div>
<div style="position: absolute; left: 2743px; top: 1457px; height: 42px; line-height: 42px; font-size: 28.16px; color: rgb(34, 34, 34); font-weight: 700; white-space: nowrap; transform: translateX(-50%); letter-spacing: -0.13px;">指示内容</div>
<div style="position: absolute; left: 3064px; top: 1457px; height: 42px; line-height: 42px; font-size: 28.16px; color: rgb(34, 34, 34); font-weight: 700; white-space: nowrap; transform: translateX(-50%); letter-spacing: -0.7px;">指示モード</div>
<div style="position: absolute; left: 3285px; top: 1457px; height: 42px; line-height: 42px; font-size: 28.16px; color: rgb(34, 34, 34); font-weight: 700; white-space: nowrap; transform: translateX(-50%); letter-spacing: 0.01px;">-</div>
<div style="position:absolute;left:2402px;top:1514.0px;width:980px;height:2px;background:#dcdcdc"></div>
<div style="position:absolute;left:2472px;top:1539.0px;height:42px;line-height:42px;font-size:28.16px;color:#222;font-weight:400;white-space:nowrap;transform:translateX(-50%);">1</div>
<div style="position: absolute; left: 2576px; top: 1540px; height: 36px; line-height: 36px; font-size: 24.3px; color: rgb(51, 51, 51); font-weight: 400; white-space: nowrap; letter-spacing: -0.09px;">発明をわかりやすく説明</div>
<div style="position: absolute; left: 3065.5px; top: 1537px; height: 42px; line-height: 42px; font-size: 28.16px; color: rgb(51, 51, 51); font-weight: 400; white-space: nowrap; transform: translateX(-50%); letter-spacing: -0.13px;">個別指示</div>
<div style="position:absolute;left:3253.5px;top:1527.5px;width:63.0px;height:63.0px;box-sizing:border-box;border:2px solid #d0d0d0;border-radius:50%"></div>
<svg style="position:absolute;left:3265.0px;top:1539.0px;" width="40" height="40" viewBox="0 0 24 24"><path fill="#616161" d="M5,20H19V18H5M19,9H15V3H9V9H5L12,16L19,9Z"></path></svg>
<div style="position:absolute;left:2402px;top:1604.0px;width:980px;height:2px;background:#dcdcdc"></div>
<div style="position:absolute;left:2472px;top:1629.0px;height:42px;line-height:42px;font-size:28.16px;color:#222;font-weight:400;white-space:nowrap;transform:translateX(-50%);">2</div>
<div style="position: absolute; left: 2576px; top: 1630px; height: 36px; line-height: 36px; font-size: 24.3px; color: rgb(51, 51, 51); font-weight: 400; white-space: nowrap; letter-spacing: -0.56px;">クレームチャート</div>
<div style="position: absolute; left: 3065.5px; top: 1627px; height: 42px; line-height: 42px; font-size: 28.16px; color: rgb(51, 51, 51); font-weight: 400; white-space: nowrap; transform: translateX(-50%); letter-spacing: -0.13px;">個別指示</div>
<div style="position:absolute;left:3253.5px;top:1617.5px;width:63.0px;height:63.0px;box-sizing:border-box;border:2px solid #d0d0d0;border-radius:50%"></div>
<svg style="position:absolute;left:3265.0px;top:1629.0px;" width="40" height="40" viewBox="0 0 24 24"><path fill="#616161" d="M5,20H19V18H5M19,9H15V3H9V9H5L12,16L19,9Z"></path></svg>
<div style="position:absolute;left:2402px;top:1694.0px;width:980px;height:2px;background:#dcdcdc"></div>
<div style="position:absolute;left:2472px;top:1719.5px;height:42px;line-height:42px;font-size:28.16px;color:#222;font-weight:400;white-space:nowrap;transform:translateX(-50%);">3</div>
<div style="position: absolute; left: 2576px; top: 1720.5px; height: 36px; line-height: 36px; font-size: 24.3px; color: rgb(51, 51, 51); font-weight: 400; white-space: nowrap; letter-spacing: 0.43px;">請求項１を説明</div>
<div style="position: absolute; left: 3065.5px; top: 1717.5px; height: 42px; line-height: 42px; font-size: 28.16px; color: rgb(51, 51, 51); font-weight: 400; white-space: nowrap; transform: translateX(-50%); letter-spacing: -0.13px;">個別指示</div>
<div style="position:absolute;left:3253.5px;top:1708.0px;width:63.0px;height:63.0px;box-sizing:border-box;border:2px solid #d0d0d0;border-radius:50%"></div>
<svg style="position:absolute;left:3265.0px;top:1719.5px;" width="40" height="40" viewBox="0 0 24 24"><path fill="#616161" d="M5,20H19V18H5M19,9H15V3H9V9H5L12,16L19,9Z"></path></svg>
<div style="position:absolute;left:2402px;top:1784.0px;width:980px;height:2px;background:#dcdcdc"></div>
<div style="position: absolute; left: 2419px; top: 1815.5px; height: 42px; line-height: 42px; font-size: 28.16px; color: rgb(34, 34, 34); font-weight: 700; white-space: nowrap; letter-spacing: -0.91px;">ダウンロードオプション</div>
<div style="position:absolute;left:2434px;top:1881px;width:32px;height:32px;box-sizing:border-box;background:#333;border-radius:5px"></div>
<div style="position:absolute;left:2484px;top:1877.5px;height:39px;line-height:39px;font-size:26px;color:#333;font-weight:400;white-space:nowrap;">評価結果を含める</div>
</div>
<div style="position:absolute;left:2367px;top:1026.5px;width:1042px;height:775.0px;box-sizing:border-box;border:5.7px solid #f43f7a;border-radius:4px;box-shadow:0 0 3px rgba(244,63,122,.35);z-index:8"></div>
<div style="position:absolute;left:3240px;top:1519px;width:96px;height:82px;box-sizing:border-box;border:5.7px solid #f43f7a;border-radius:4px;box-shadow:0 0 3px rgba(244,63,122,.35);z-index:8"></div>
<svg style="position:absolute;left:3251px;top:1345px;filter:drop-shadow(0 2px 3px rgba(0,0,0,.28));z-index:9" width="190" height="190" viewBox="-70 -70 190 190"><g stroke="#fff" stroke-width="4" stroke-linejoin="round" fill="#fff"><path d="M-30 0 L-30 68 L0 92 L30 68 L30 0Z"></path><circle r="52"></circle></g><path fill="#f43f7a" d="M-30 0 L-30 68 L0 92 L30 68 L30 0Z"></path><circle r="52" fill="#f43f7a"></circle><circle r="38" fill="#fff"></circle><circle r="34" fill="none" stroke="#dedede" stroke-width="1.3"></circle><g transform="translate(-1,0.5) rotate(-16) scale(2.0) translate(-12,-12.2)"><path fill="#f43f7a" d="M12,21.35L10.55,20.03C5.4,15.36 2,12.27 2,8.5C2,5.41 4.42,3 7.5,3C9.24,3 10.91,3.81 12,5.08C13.09,3.81 14.76,3 16.5,3C19.58,3 22,5.41 22,8.5C22,12.27 18.6,15.36 13.45,20.03L12,21.35Z"></path></g></svg>
<div style="position:absolute;left:3335px;top:1808px;width:135px;height:102px;box-sizing:border-box;background:#fff;border-radius:28px 0 0 0;box-shadow:-5px -1px 20px rgba(0,0,0,.17);z-index:10"></div>
<div style="position:absolute;left:0;top:0;width:3406px;height:140px;overflow:hidden;z-index:6">
<div style="position:absolute;left:0px;top:0px;width:3406px;height:121px;box-sizing:border-box;background:linear-gradient(#2c887d 0,#33a094 9px,#38ab9d 21px);box-shadow:0 3px 9px rgba(0,0,0,.5)"></div>
<svg style="position:absolute;left:30px;top:15px" width="310" height="90" viewBox="0 0 2576 748"><path fill="#fff" d="M440 100 C500 88 590 88 650 130 C680 160 695 220 695 285 L742 355 L722 375 L728 400 L714 420 L722 440 L706 480 C700 505 660 505 620 508 C585 525 545 570 520 612 L440 612Z"></path><path d="M625 132 C610 230 570 310 510 362" stroke="#38ab9d" stroke-width="4" fill="none"></path><g fill="#fff"><rect x="360" y="95" width="55" height="16" rx="3"></rect><rect x="290" y="132" width="30" height="16" rx="3"></rect><rect x="355" y="132" width="60" height="16" rx="3"></rect><rect x="250" y="177" width="40" height="16" rx="3"></rect><rect x="310" y="177" width="40" height="16" rx="3"></rect><rect x="375" y="177" width="70" height="16" rx="3"></rect><rect x="215" y="220" width="30" height="16" rx="3"></rect><rect x="265" y="220" width="60" height="16" rx="3"></rect><rect x="345" y="220" width="100" height="16" rx="3"></rect><rect x="215" y="262" width="35" height="16" rx="3"></rect><rect x="275" y="262" width="65" height="16" rx="3"></rect><rect x="365" y="262" width="80" height="16" rx="3"></rect><rect x="215" y="304" width="45" height="16" rx="3"></rect><rect x="280" y="304" width="120" height="16" rx="3"></rect><rect x="420" y="304" width="25" height="16" rx="3"></rect><rect x="235" y="345" width="30" height="16" rx="3"></rect><rect x="285" y="345" width="70" height="16" rx="3"></rect><rect x="375" y="345" width="70" height="16" rx="3"></rect><rect x="235" y="387" width="65" height="16" rx="3"></rect><rect x="320" y="387" width="30" height="16" rx="3"></rect><rect x="370" y="387" width="30" height="16" rx="3"></rect><rect x="235" y="430" width="55" height="16" rx="3"></rect><rect x="310" y="430" width="65" height="16" rx="3"></rect><rect x="235" y="472" width="15" height="16" rx="3"></rect><rect x="270" y="472" width="150" height="16" rx="3"></rect><rect x="200" y="514" width="30" height="16" rx="3"></rect><rect x="250" y="514" width="85" height="16" rx="3"></rect><rect x="355" y="514" width="75" height="16" rx="3"></rect><rect x="160" y="557" width="20" height="16" rx="3"></rect><rect x="200" y="557" width="90" height="16" rx="3"></rect><rect x="310" y="557" width="120" height="16" rx="3"></rect><rect x="105" y="598" width="35" height="16" rx="3"></rect><rect x="160" y="598" width="65" height="16" rx="3"></rect><rect x="245" y="598" width="120" height="16" rx="3"></rect><rect x="385" y="598" width="35" height="16" rx="3"></rect><rect x="440" y="598" width="70" height="16" rx="3"></rect></g><g fill="none" stroke="#fff" stroke-width="31" stroke-linejoin="round"><path d="M830 185H1165M920 105V282M1070 105V300Q1070 400 985 430"></path><path d="M1280 125H1600L1405 345M1362 335Q1440 370 1458 432"></path><path d="M1765 105V282M1935 105V320Q1935 400 1858 430"></path><path d="M2110 125H2395Q2400 220 2345 262M2235 200V340Q2235 405 2175 432"></path></g><g fill="#fff" font-family="Liberation Sans, sans-serif" font-weight="700" font-size="106" text-anchor="middle"><text x="866" y="611">S</text><text x="1080" y="611">U</text><text x="1288" y="611">M</text><text x="1525" y="611">M</text><text x="1735" y="611">A</text><text x="1942" y="611">R</text><text x="2135" y="611">I</text><text x="2345" y="611">A</text></g></svg>
<div style="position: absolute; left: 386px; top: 34px; height: 48px; line-height: 48px; font-size: 31.7px; color: rgb(255, 255, 255); font-weight: 700; white-space: nowrap; letter-spacing: -0.57px;">査読支援ツール</div>
<svg style="position:absolute;left:636.0px;top:38.0px;" width="40" height="40" viewBox="0 0 24 24"><path fill="#fff" d="M11 18h2v-2h-2v2zm1-16C6.48 2 2 6.48 2 12s4.48 10 10 10 10-4.48 10-10S17.52 2 12 2zm0 18c-4.41 0-8-3.59-8-8s3.59-8 8-8 8 3.59 8 8-3.59 8-8 8zm0-14c-2.21 0-4 1.79-4 4h2c0-1.1.9-2 2-2s2 .9 2 2c0 2-3 1.75-3 5h2c0-2.25 3-2.5 3-5 0-2.21-1.79-4-4-4z"></path></svg>
<div style="position: absolute; left: 719.5px; top: 36px; height: 46px; line-height: 46px; font-size: 31px; color: rgb(255, 255, 255); font-weight: 700; white-space: nowrap; letter-spacing: 0.32px;"><span style="font-size:26px">No. </span>29</div>
<div style="position: absolute; left: 824px; top: 38px; height: 42px; line-height: 42px; font-size: 28px; color: rgb(255, 255, 255); font-weight: 400; white-space: nowrap; letter-spacing: -0.4px;">(7 <span style="font-size:24px">件</span>)</div>
<svg style="position:absolute;left:921.0px;top:34.0px;" width="48" height="48" viewBox="0 0 24 24"><path fill="#fff" d="M3.9 12c0-1.71 1.39-3.1 3.1-3.1h4V7H7c-2.76 0-5 2.24-5 5s2.24 5 5 5h4v-1.9H7c-1.71 0-3.1-1.39-3.1-3.1zM8 13h8v-2H8v2zm9-6h-4v1.9h4c1.71 0 3.1 1.39 3.1 3.1s-1.39 3.1-3.1 3.1h-4V17h4c2.76 0 5-2.24 5-5s-2.24-5-5-5z"></path></svg>
<svg style="position:absolute;left:990.0px;top:39.0px;" width="38" height="38" viewBox="0 0 24 24"><path fill="#fff" d="M19 3H5c-1.11 0-2 .9-2 2v14c0 1.1.89 2 2 2h14c1.1 0 2-.9 2-2V5c0-1.1-.89-2-2-2zm0 16H5V7h14v12zm-5.5-6c0 .83-.67 1.5-1.5 1.5s-1.5-.67-1.5-1.5.67-1.5 1.5-1.5 1.5.67 1.5 1.5zM12 9c-2.73 0-5.06 1.66-6 4 .94 2.34 3.27 4 6 4s5.06-1.66 6-4c-.94-2.34-3.27-4-6-4zm0 6.5c-1.38 0-2.5-1.12-2.5-2.5s1.12-2.5 2.5-2.5 2.5 1.12 2.5 2.5-1.12 2.5-2.5 2.5z"></path></svg>
<div style="position: absolute; left: 1045px; top: 36px; height: 40px; line-height: 40px; font-size: 26.4px; color: rgba(255, 255, 255, 0.92); font-weight: 400; white-space: nowrap; letter-spacing: -0.5px;">サンプリング指示</div>
<svg style="position:absolute;left:1290.0px;top:39.0px;" width="38" height="38" viewBox="0 0 24 24"><path fill="#fff" d="M3 17.25V21h3.75L17.81 9.94l-3.75-3.75L3 17.25zM20.71 7.04c.39-.39.39-1.02 0-1.41l-2.34-2.34c-.39-.39-1.02-.39-1.41 0l-1.83 1.83 3.75 3.75 1.83-1.83z"></path></svg>
<div style="position: absolute; left: 1344px; top: 36px; height: 40px; line-height: 40px; font-size: 26.4px; color: rgba(255, 255, 255, 0.92); font-weight: 400; white-space: nowrap; letter-spacing: -0.5px;">編集</div>
<div style="position:absolute;left:1426px;top:38px;width:1199px;height:40px;box-sizing:border-box;background:#fff;border-radius:5px"></div>
<div style="position: absolute; left: 1435px; top: 39px; height: 36px; line-height: 36px; font-size: 24.3px; color: rgb(17, 17, 17); font-weight: 400; white-space: nowrap; letter-spacing: 0.07px;">査読支援ページ作成用のサンプル</div>
<div style="position:absolute;left:2641px;top:28px;width:195px;height:60px;box-sizing:border-box;border:2px solid rgba(255,255,255,.9);border-radius:9px"></div>
<svg style="position:absolute;left:2657.0px;top:40.0px;" width="36" height="36" viewBox="0 0 24 24"><path fill="#fff" d="M20 11H7.83l5.59-5.59L12 4l-8 8 8 8 1.41-1.41L7.83 13H20v-2z"></path></svg>
<div style="position: absolute; left: 2710px; top: 37.5px; height: 39px; line-height: 39px; font-size: 26.2px; color: rgb(255, 255, 255); font-weight: 700; white-space: nowrap; letter-spacing: 0px;">指示一覧</div>
<div style="position:absolute;left:2852px;top:28px;width:141px;height:60px;box-sizing:border-box;border:2px solid rgba(255,255,255,.9);border-radius:9px"></div>
<svg style="position:absolute;left:2867.0px;top:40.0px;" width="36" height="36" viewBox="0 0 24 24"><path fill="#fff" d="M12 4V1L8 5l4 4V6c3.31 0 6 2.69 6 6 0 1.01-.25 1.97-.7 2.8l1.46 1.46C19.54 15.03 20 13.57 20 12c0-4.42-3.58-8-8-8zm0 14c-3.31 0-6-2.69-6-6 0-1.01.25-1.97.7-2.8L5.24 7.74C4.46 8.97 4 10.43 4 12c0 4.42 3.58 8 8 8v3l4-4-4-4v3z"></path></svg>
<div style="position: absolute; left: 2921px; top: 37.5px; height: 39px; line-height: 39px; font-size: 26.2px; color: rgb(255, 255, 255); font-weight: 700; white-space: nowrap; letter-spacing: -0.5px;">更新</div>
<div style="position:absolute;left:3017px;top:11px;width:237px;height:94px;box-sizing:border-box;border:2px solid rgba(255,255,255,.9);border-radius:9px"></div>
<div style="position: absolute; left: 3233px; top: 22.5px; height: 31px; line-height: 31px; font-size: 20.5px; color: rgba(255, 255, 255, 0.95); font-weight: 400; white-space: nowrap; transform: translateX(-100%); letter-spacing: 0.49px;">付与指示数: <span style="font-size:23px">2000</span></div>
<div style="position: absolute; left: 3233px; top: 60.5px; height: 37px; line-height: 37px; font-size: 24.5px; color: rgb(255, 255, 255); font-weight: 400; white-space: nowrap; transform: translateX(-100%); letter-spacing: -0.63px;">残り指示数: <span style="font-size:28px;font-weight:700">1674</span></div>
<svg style="position:absolute;left:3276px;top:8px;overflow:visible" width="100" height="100" viewBox="-50 -50 100 100"><circle cy="3" r="37" fill="rgba(0,0,0,.28)" style="filter:blur(3px)"></circle><circle r="37.6" fill="#9db3c8" stroke="#c4e6ea" stroke-width="1.2"></circle><path fill="#6e3c2c" stroke="#3e2219" stroke-width="1" d="M-20.7 21 C-21 8 -21 -6 -15.2 -15.6 C-10 -21 8 -22.5 12.9 -18 C19 -14 21.5 -4 21.1 9.4 L19.4 20.8 C8 22 -10 22 -20.7 21Z"></path><path fill="#f8dcc8" d="M-15.8 1 L12 1 L12.3 7 C12 14 7 18.8 -2 18.8 C-11 18.8 -16.5 12 -15.8 1Z"></path><path fill="#6e3c2c" d="M-16.5 2.5 C-14 -4 -10 -6 12.5 -6 L13 3 L6.5 -4 L5.5 1 L-3 0.2 L-9 1.6 L-13 0.5Z"></path><g fill="none" stroke="#e3a55c" stroke-width="1.1"><circle cx="-8.2" cy="7" r="4.6"></circle><circle cx="3.1" cy="7" r="4.6"></circle><path d="M-3.6 6.5H-1.5"></path></g><ellipse cx="-8" cy="7" rx="0.9" ry="1.5" fill="#2a1a14"></ellipse><ellipse cx="3" cy="7" rx="0.9" ry="1.5" fill="#2a1a14"></ellipse><path d="M-5.5 13 Q-2.5 15.5 0.5 13" stroke="#7a3b2a" stroke-width="0.9" fill="none"></path><path d="M8.5 12 Q7 14.5 5.5 14.3" stroke="#3a2a24" stroke-width="0.8" fill="none"></path><ellipse cx="5.6" cy="14.4" rx="1.9" ry="1.3" fill="#3a2a24"></ellipse><rect x="15.6" y="0" width="5" height="12.5" rx="2.2" fill="#8fb5a0" stroke="#4f6e5e" stroke-width="0.7"></rect><rect x="-20.5" y="4" width="1.8" height="8" rx="0.9" fill="#8fb5a0"></rect></svg>
</div>
<div style="position:absolute;left:4px;top:146px;width:195px;height:61px;box-sizing:border-box;background:#38ab9d;border-radius:9px;box-shadow:0 3px 5px rgba(0,0,0,.3)"></div>
<svg style="position:absolute;left:19.5px;top:159.5px;" width="36" height="36" viewBox="0 0 24 24"><path fill="#fff" d="M3 10h11v2H3zm0-4h11v2H3zm0 8h7v2H3zm13-1v8l6-4z"></path></svg>
<div style="position: absolute; left: 73px; top: 155px; height: 40px; line-height: 40px; font-size: 26.4px; color: rgb(255, 255, 255); font-weight: 700; white-space: nowrap; letter-spacing: 0.25px;">新規査読</div>
<div style="position:absolute;left:231px;top:146px;width:520px;height:62px;box-sizing:border-box;border:2px solid #c4c4c4;border-radius:9px"></div><div style="position:absolute;left:251px;top:140px;width:111px;height:12px;box-sizing:border-box;background:#fff"></div><div style="position: absolute; left: 259px; top: 127.5px; height: 35px; line-height: 35px; font-size: 23.6px; color: rgb(51, 51, 51); font-weight: 400; white-space: nowrap; letter-spacing: -0.25px;">文書番号</div>
<svg style="position:absolute;left:694.0px;top:157.0px;" width="40" height="40" viewBox="0 0 24 24"><path fill="#757575" d="M5,3H19A2,2 0 0,1 21,5V19A2,2 0 0,1 19,21H5A2,2 0 0,1 3,19V5A2,2 0 0,1 5,3M7,5A2,2 0 0,0 5,7A2,2 0 0,0 7,9A2,2 0 0,0 9,7A2,2 0 0,0 7,5M17,15A2,2 0 0,0 15,17A2,2 0 0,0 17,19A2,2 0 0,0 19,17A2,2 0 0,0 17,15M17,5A2,2 0 0,0 15,7A2,2 0 0,0 17,9A2,2 0 0,0 19,7A2,2 0 0,0 17,5M12,10A2,2 0 0,0 10,12A2,2 0 0,0 12,14A2,2 0 0,0 14,12A2,2 0 0,0 12,10M7,15A2,2 0 0,0 5,17A2,2 0 0,0 7,19A2,2 0 0,0 9,17A2,2 0 0,0 7,15Z"></path></svg>
<div style="position:absolute;left:766px;top:146px;width:253px;height:62px;box-sizing:border-box;border:2px solid #c4c4c4;border-radius:9px"></div><div style="position:absolute;left:786px;top:140px;width:113px;height:12px;box-sizing:border-box;background:#fff"></div><div style="position: absolute; left: 794px; top: 127.5px; height: 35px; line-height: 35px; font-size: 23.6px; color: rgb(51, 51, 51); font-weight: 400; white-space: nowrap; letter-spacing: 0.25px;">確認状態</div>
<svg style="position:absolute;left:958.0px;top:155.0px;" width="44" height="44" viewBox="0 0 24 24"><path fill="#757575" d="M7,10L12,15L17,10H7Z"></path></svg>
<div style="position:absolute;left:1034px;top:146px;width:341px;height:62px;box-sizing:border-box;border:2px solid #c4c4c4;border-radius:9px"></div><div style="position:absolute;left:1056px;top:140px;width:60px;height:12px;box-sizing:border-box;background:#fff"></div><div style="position: absolute; left: 1064px; top: 127.5px; height: 35px; line-height: 35px; font-size: 23.6px; color: rgb(51, 51, 51); font-weight: 400; white-space: nowrap; letter-spacing: -3px;">メモ</div>
<div style="position:absolute;left:1391px;top:146px;width:251px;height:62px;box-sizing:border-box;border:2px solid #c4c4c4;border-radius:9px"></div><div style="position:absolute;left:1413px;top:140px;width:59px;height:12px;box-sizing:border-box;background:#fff"></div><div style="position: absolute; left: 1421px; top: 127.5px; height: 35px; line-height: 35px; font-size: 23.6px; color: rgb(51, 51, 51); font-weight: 400; white-space: nowrap; letter-spacing: -3.5px;">タグ</div>
<svg style="position:absolute;left:1580.0px;top:155.0px;" width="44" height="44" viewBox="0 0 24 24"><path fill="#757575" d="M7,10L12,15L17,10H7Z"></path></svg>
<div style="position:absolute;left:1658px;top:146px;width:341px;height:62px;box-sizing:border-box;border:2px solid #c4c4c4;border-radius:9px"></div><div style="position:absolute;left:1679px;top:140px;width:107px;height:12px;box-sizing:border-box;background:#fff"></div><div style="position: absolute; left: 1687px; top: 127.5px; height: 35px; line-height: 35px; font-size: 23.6px; color: rgb(51, 51, 51); font-weight: 400; white-space: nowrap; letter-spacing: -2.25px;">クラスタ</div>
<svg style="position:absolute;left:1939.0px;top:155.0px;" width="44" height="44" viewBox="0 0 24 24"><path fill="#bdbdbd" d="M7,10L12,15L17,10H7Z"></path></svg>
<div style="position:absolute;left:2015px;top:146px;width:193px;height:62px;box-sizing:border-box;border:2px solid #9bd5ce;border-radius:9px"></div>
<svg style="position:absolute;left:2030.7px;top:159.0px;" width="36" height="36" viewBox="0 0 24 24"><path fill="#38ab9d" d="M4.25 5.61C6.27 8.2 10 13 10 13v6c0 .55.45 1 1 1h2c.55 0 1-.45 1-1v-6s3.72-4.8 5.74-7.39c.51-.66.04-1.61-.79-1.61H5.04c-.83 0-1.3.95-.79 1.61z"></path></svg>
<div style="position: absolute; left: 2085px; top: 156px; height: 38px; line-height: 38px; font-size: 25px; color: rgb(56, 171, 157); font-weight: 400; white-space: nowrap; letter-spacing: -1.5px;">フィルタ</div>
<div style="position:absolute;left:2188px;top:126px;width:40px;height:40px;box-sizing:border-box;background:#38ab9d;border-radius:50%;color:#fff;font-size:23px;text-align:center;line-height:38px">7</div>
</body></html>
